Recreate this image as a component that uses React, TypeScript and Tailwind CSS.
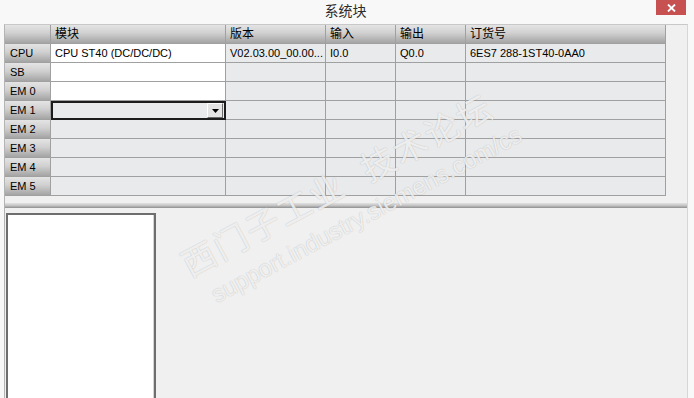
import React from "react";

const colW = ["w-[46px]", "w-[175px]", "w-[100px]", "w-[70px]", "w-[70px]", "w-[200px]"];
const heads = ["", "模块", "版本", "输入", "输出", "订货号"];

type Row = { name: string; cells?: string[]; white?: boolean; combo?: boolean };

const rows: Row[] = [
  { name: "CPU", cells: ["CPU ST40 (DC/DC/DC)", "V02.03.00_00.00...", "I0.0", "Q0.0", "6ES7 288-1ST40-0AA0"], white: true },
  { name: "SB", white: true },
  { name: "EM 0", white: true },
  { name: "EM 1", combo: true },
  { name: "EM 2" },
  { name: "EM 3" },
  { name: "EM 4" },
  { name: "EM 5" },
];

const grad = "bg-[linear-gradient(to_bottom,#e4e4e4_0%,#d0d0d0_45%,#a4a4a4_100%)]";

export default function App() {
  return (
    <div
      className="relative w-[694px] h-[398px] overflow-hidden bg-[#f8f8f8] flex flex-col text-black"
      style={{ fontFamily: '"Liberation Sans", "Noto Sans CJK SC", sans-serif' }}
    >
      {/* title bar */}
      <div className="relative h-[24px] flex items-center justify-center">
        <span className="text-[14px] text-[#2b2b2b] -mt-[2px] -ml-[3px]">系统块</span>
        <div className="absolute right-[8px] top-0 w-[30px] h-[15px] bg-[#c75050] flex items-center justify-center">
          <svg width="9" height="8" viewBox="0 0 9 8">
            <path d="M1 0.5 L8 7.5 M8 0.5 L1 7.5" stroke="#fff" strokeWidth="1.8" />
          </svg>
        </div>
      </div>

      {/* body */}
      <div className="flex-1 ml-[4px] mr-[6px] border-l border-t border-r border-l-[#b4b4b4] border-t-[#c8c8c8] border-r-[#d6d6d6] bg-[#f0f0f0] flex flex-col">
        <div className="flex">
          <div className="flex flex-col text-[11px]">
            {/* header */}
            <div className="flex">
              {heads.map((h, i) => (
                <div
                  key={i}
                  className={`${colW[i]} ${grad} h-[19px] border-r border-b border-[#a0a0a0] pl-[4px] flex items-center text-[12px] whitespace-nowrap`}
                >
                  {h}
                </div>
              ))}
            </div>
            {rows.map((r) => (
              <div key={r.name} className="flex">
                <div className={`${colW[0]} ${grad} h-[19px] border-r border-b border-[#a0a0a0] pl-[5px] flex items-center whitespace-nowrap`}>
                  {r.name}
                </div>
                {r.combo ? (
                  <div className={`${colW[1]} h-[19px] border-b border-[#a0a0a0]`}>
                    <div className="h-[19px] border-2 border-[#1c1c1c] bg-[#e9eaec] flex items-center justify-end pr-[1px]">
                      <div className="w-[16px] h-[15px] bg-[#e4e4e4] border-r border-b border-r-[#6a6a6a] border-b-[#6a6a6a] border-t border-l border-t-white border-l-white flex items-center justify-center">
                        <svg width="7" height="4" viewBox="0 0 7 4">
                          <path d="M0 0 H7 L3.5 4 Z" fill="#000" />
                        </svg>
                      </div>
                    </div>
                  </div>
                ) : (
                  <div
                    className={`${colW[1]} h-[19px] border-r border-b border-[#a0a0a0] pl-[4px] flex items-center whitespace-nowrap overflow-hidden ${r.white ? "bg-white" : "bg-[#e9eaec]"}`}
                  >
                    {r.cells ? r.cells[0] : ""}
                  </div>
                )}
                {[2, 3, 4, 5].map((c) => (
                  <div
                    key={c}
                    className={`${colW[c]} h-[19px] border-r border-b border-[#a0a0a0] bg-[#e9eaec] pl-[4px] flex items-center whitespace-nowrap overflow-hidden`}
                  >
                    {r.cells ? r.cells[c - 1] : ""}
                  </div>
                ))}
              </div>
            ))}
          </div>
        </div>

        <div className="h-[7px]" />
        <div className="h-[5px] bg-[linear-gradient(to_bottom,#e2e2e2,#c4c4c4_50%,#8e8e8e)]" />
        <div className="h-[5px]" />

        <div className="flex-1 flex">
          <div className="ml-[1px] w-[150px] h-full border-t-2 border-l-2 border-r-2 border-[#6e6e6e] bg-white">
            <div className="h-full ml-auto w-[1px] bg-[#d4d4d4]" />
          </div>
        </div>
      </div>

      {/* watermark */}
      <div className="pointer-events-none absolute left-[144px] top-[160px] w-[420px] h-[84px] -rotate-[28deg] flex flex-col items-center text-white/80 [text-shadow:0_0_1px_rgba(0,0,0,0.3)]">
        <div className="text-[34px] leading-[40px] tracking-[2px] whitespace-nowrap -ml-[14px]">西门子工业&nbsp;&nbsp;技术论坛</div>
        <div className="mt-[5px] text-[24px] leading-[28px] whitespace-nowrap ml-[10px]">support.industry.siemens.com/cs</div>
      </div>
    </div>
  );
}
